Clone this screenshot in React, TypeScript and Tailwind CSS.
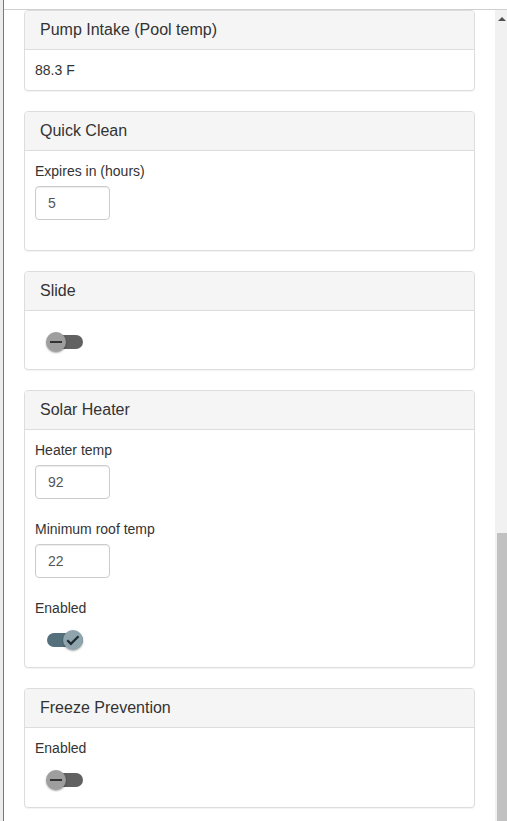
import React, { useState } from 'react';

const font = { fontFamily: '"Liberation Sans", Arial, sans-serif' };

const Panel: React.FC<{ title: string; children: React.ReactNode }> = ({ title, children }) => (
  <div className="mb-5 rounded-[4px] border border-[#ddd] bg-white shadow-[0_1px_1px_rgba(0,0,0,0.05)]">
    <div className="rounded-t-[3px] border-b border-[#ddd] bg-[#f5f5f5] px-[15px] py-[10px] text-[16px] leading-[18px] text-[#333]">
      {title}
    </div>
    <div className="p-[10px] text-[14px] leading-[20px] text-[#333]">{children}</div>
  </div>
);

const NumberField: React.FC<{ label: string; value: string; last?: boolean }> = ({ label, value, last }) => (
  <div className={last ? '' : 'mb-5'}>
    <label className="mb-[5px] block">{label}</label>
    <input
      defaultValue={value}
      className="block h-[34px] w-[75px] rounded-[4px] border border-[#ccc] px-3 text-[14px] text-[#555] shadow-[inset_0_1px_1px_rgba(0,0,0,0.075)] outline-none"
      style={font}
    />
  </div>
);

const Toggle: React.FC<{ initial: boolean }> = ({ initial }) => {
  const [on, setOn] = useState(initial);
  return (
    <div className="flex h-[34px] items-center pl-3">
      <button
        onClick={() => setOn(v => !v)}
        className={`relative h-[14px] w-9 rounded-full ${on ? 'bg-[#55707d]' : 'bg-[#616161]'}`}
      >
        <span
          className={`absolute top-[-3px] flex h-5 w-5 items-center justify-center rounded-full shadow-[0_1px_2px_rgba(0,0,0,0.35)] ${
            on ? 'right-0 bg-[#90a4ae]' : 'left-[-1px] bg-[#9e9e9e]'
          }`}
        >
          {on ? (
            <svg width="20" height="20" viewBox="0 0 20 20">
              <path d="M4.3 10.3l3.6 3.6 7.6-7.6" fill="none" stroke="#1f2b31" strokeWidth="2.2" />
            </svg>
          ) : (
            <span className="block h-[2px] w-[12px] bg-[#333]" />
          )}
        </span>
      </button>
    </div>
  );
};

const App: React.FC = () => {
  return (
    <div className="flex h-[821px] w-full overflow-hidden bg-white" style={font}>
      <div className="w-[3px] bg-[#ececec]" />
      <div className="w-px bg-[#7a7a7a]" />
      <div className="flex min-w-0 flex-1 flex-col">
        <div className="h-[9px] border-b border-[#cfcfcf] bg-white box-content" />
        <div className="flex min-h-0 flex-1">
          <div className="flex-1 px-5">
            <Panel title="Pump Intake (Pool temp)">88.3 F</Panel>
            <Panel title="Quick Clean">
              <NumberField label="Expires in (hours)" value="5" />
            </Panel>
            <Panel title="Slide">
              <label className="mb-[4px] block h-0" />
              <Toggle initial={false} />
            </Panel>
            <Panel title="Solar Heater">
              <NumberField label="Heater temp" value="92" />
              <NumberField label="Minimum roof temp" value="22" />
              <label className="mb-[5px] block">Enabled</label>
              <Toggle initial={true} />
            </Panel>
            <Panel title="Freeze Prevention">
              <label className="mb-[5px] block">Enabled</label>
              <Toggle initial={false} />
            </Panel>
          </div>
          <div className="flex w-3 flex-col bg-[#f1f1f1]">
            <div className="flex h-[17px] items-center justify-center pl-[2px]">
              <div className="h-0 w-0 border-x-[4px] border-b-[4px] border-x-transparent border-b-[#505050]" />
            </div>
            <div className="flex-1" />
            <div className="ml-[2px] h-[288px] bg-[#c1c1c1]" />
          </div>
        </div>
      </div>
    </div>
  );
};

export default App;
